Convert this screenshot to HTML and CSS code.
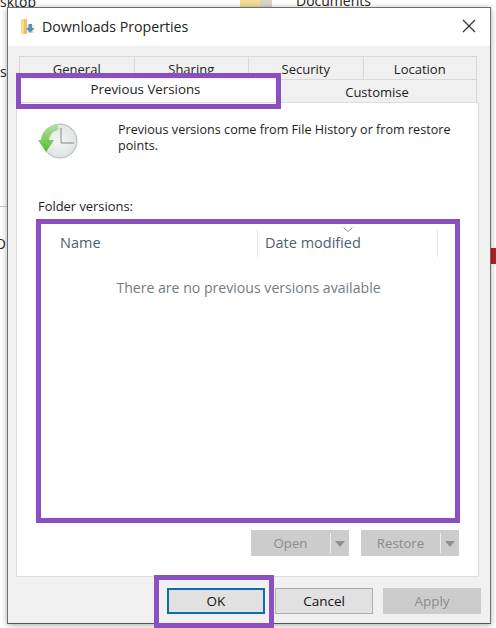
FILE: index.html
```html
<!DOCTYPE html>
<html lang="en">
<head>
    <meta charset="UTF-8">
    <meta name="viewport" content="width=device-width, initial-scale=1.0">
    <title>Downloads Properties</title>
    <link rel="stylesheet" href="styles.css">
</head>
<body>
    <div class="desktop">
        <span class="behind behind-desktop">sktop</span>
        <span class="behind behind-si">si</span>
        <span class="behind behind-o">O</span>
        <span class="behind behind-docs">Documents</span>
        <svg class="behind-folder" width="36" height="8" viewBox="0 0 36 8">
            <rect x="0" y="0" width="20" height="8" fill="#f3dc98"/>
            <rect x="20" y="0" width="12" height="8" fill="#d9d6c8"/>
        </svg>
        <div class="behind-line"></div>
        <div class="behind-red"></div>

        <div class="dialog">
            <div class="titlebar">
                <svg class="folder-icon" width="16" height="17" viewBox="0 0 16 17">
                    <path d="M1 1h6v15H1z" fill="#f5dc92"/>
                    <path d="M4 1h3v15H4z" fill="#e9c565"/>
                    <path d="M7 7h7v8H7z" fill="#f8e8b8"/>
                    <path d="M8.500 6h3.500v4h2.500l-4.250 5-4.250-5h2.500z" fill="#4f8fca"/>
                </svg>
                <span class="title">Downloads Properties</span>
                <svg class="close-icon" width="14" height="14" viewBox="0 0 14 14">
                    <path d="M1 1l12 12M13 1L1 13" stroke="#333" stroke-width="1.200" fill="none"/>
                </svg>
            </div>

            <div class="content">
                <div class="tabs">
                    <div class="tab-row row-top">
                        <div class="tab">General</div>
                        <div class="tab">Sharing</div>
                        <div class="tab">Security</div>
                        <div class="tab">Location</div>
                    </div>
                    <div class="tab-row row-bottom">
                        <div class="tab tab-active">Previous Versions</div>
                        <div class="tab">Customise</div>
                    </div>
                </div>

                <div class="panel">
                    <div class="intro">
                        <svg class="clock-icon" width="42" height="36" viewBox="0 0 42 36">
                            <defs>
                                <radialGradient id="face" cx="0.5" cy="0.5" r="0.6">
                                    <stop offset="0" stop-color="#f4f6f4"/>
                                    <stop offset="0.75" stop-color="#e2e6e4"/>
                                    <stop offset="1" stop-color="#a9b3b0"/>
                                </radialGradient>
                                <linearGradient id="arrow" x1="0" y1="0" x2="0" y2="1">
                                    <stop offset="0" stop-color="#b5dfa0"/>
                                    <stop offset="1" stop-color="#4fc02e"/>
                                </linearGradient>
                            </defs>
                            <circle cx="22" cy="18" r="17" fill="url(#face)" stroke="#b4bdba"/>
                            <path d="M23 5v15h13" stroke="#7f8a87" stroke-width="1" fill="none"/>
                            <path d="M20 1C10 2 4 8 3 17H0l8 12 8-12h-5c1-6 4-9 9-10z" fill="url(#arrow)"/>
                        </svg>
                        <p>Previous versions come from File History or from restore points.</p>
                    </div>

                    <div class="list-label">Folder versions:</div>
                    <div class="list">
                        <div class="list-head">
                            <div class="col col-name">Name</div>
                            <div class="col col-date">Date modified</div>
                            <svg class="sort-arrow" width="10" height="5" viewBox="0 0 10 5">
                                <path d="M0.500 0.500L5 4.500l4.500-4" stroke="#8d9499" fill="none"/>
                            </svg>
                        </div>
                        <div class="list-empty">There are no previous versions available</div>
                    </div>

                    <div class="split-row">
                        <div class="split-btn">
                            <span class="split-text">Open</span>
                            <span class="split-arrow"></span>
                        </div>
                        <div class="split-btn">
                            <span class="split-text">Restore</span>
                            <span class="split-arrow"></span>
                        </div>
                    </div>
                </div>

                <div class="footer">
                    <div class="btn btn-ok">OK</div>
                    <div class="btn">Cancel</div>
                    <div class="btn btn-off">Apply</div>
                </div>
            </div>
        </div>

        <div class="mark mark-tab"></div>
        <div class="mark mark-list"></div>
        <div class="mark mark-ok"></div>
    </div>
</body>
</html>
```

FILE: styles.css
```css
* {
    margin: 0;
    padding: 0;
    box-sizing: border-box;
}

body {
    font-family: "Open Sans", "Liberation Sans", sans-serif;
    background: #fff;
    color: #1a1a1a;
}

.desktop {
    position: relative;
    width: 496px;
    height: 628px;
    overflow: hidden;
    background: #fff;
}

/* stuff peeking out from behind the dialog */
.behind {
    position: absolute;
    font-size: 14px;
    line-height: 16px;
    color: #222;
}

.behind-desktop { left: 0; top: -6px; }
.behind-si { left: 0; top: 64px; }
.behind-o { left: -5px; top: 236px; }
.behind-docs { left: 296px; top: -7px; }

.behind-folder {
    position: absolute;
    left: 240px;
    top: 0;
}

.behind-line {
    position: absolute;
    left: 0;
    top: 206px;
    width: 7px;
    height: 1px;
    background: #ccc;
}

.behind-red {
    position: absolute;
    left: 491px;
    top: 248px;
    width: 5px;
    height: 16px;
    background: #b8201f;
}

.dialog {
    position: absolute;
    left: 7px;
    top: 7px;
    width: 484px;
    height: 617px;
    background: #f0f0f0;
    border: 1px solid #6f6f6f;
    border-bottom-color: #555;
    box-shadow: 0 1px 6px rgba(0, 0, 0, 0.35);
    display: flex;
    flex-direction: column;
}

.titlebar {
    height: 38px;
    flex-shrink: 0;
    background: #fff;
    display: flex;
    align-items: center;
    padding: 0 8px 0 12px;
}

.folder-icon {
    margin-right: 6px;
    margin-top: -1px;
}

.title {
    flex: 1;
    font-size: 14.200px;
    color: #222;
    margin-top: -1px;
}

.close-icon {
    margin-right: 6px;
    margin-top: -2px;
}

.content {
    flex: 1;
    padding: 10px 0 0 8px;
    display: flex;
    flex-direction: column;
}

.tabs {
    width: 461px;
    height: 46px;
    flex-shrink: 0;
    padding-left: 3px;
}

.tab-row {
    display: flex;
    height: 23px;
    width: 458px;
}

.tab {
    border: 1px solid #d9d9d9;
    border-right: none;
    border-bottom: none;
    background: #f0f0f0;
    font-size: 13px;
    line-height: 24px;
    text-align: center;
    color: #222;
    white-space: nowrap;
    overflow: hidden;
}

.tab:last-child {
    border-right: 1px solid #d9d9d9;
}

.row-top .tab {
    width: 114.500px;
}

.row-bottom {
    margin-left: -3px;
    width: 461px;
}

.row-bottom .tab {
    flex: 1;
    line-height: 25px;
}

.row-bottom .tab-active {
    flex: none;
    width: 261px;
    background: #fff;
    border: none;
    font-size: 13.300px;
    line-height: 21px;
    padding-right: 2px;
}

.panel {
    width: 463px;
    height: 475px;
    flex-shrink: 0;
    background: #fff;
    border: 1px solid #dcdcdc;
    padding: 19px 19px 0 21px;
    display: flex;
    flex-direction: column;
}

.intro {
    height: 76px;
    flex-shrink: 0;
    display: flex;
    align-items: flex-start;
}

.clock-icon {
    flex-shrink: 0;
    margin: 1px 38px 0 0;
}

.intro p {
    font-size: 12.600px;
    line-height: 16px;
    color: #1c1c1c;
    width: 345px;
}

.list-label {
    font-size: 12.900px;
    line-height: 16px;
    height: 23px;
    color: #1c1c1c;
}

.list {
    height: 295px;
    flex-shrink: 0;
    background: #fff;
    padding-top: 9px;
}

.list-head {
    position: relative;
    display: flex;
    height: 27px;
}

.col {
    font-size: 14.500px;
    line-height: 26px;
    color: #4c6072;
    padding-left: 7px;
    border-right: 1px solid #e5e5e5;
}

.col-name {
    width: 220px;
    padding-left: 22px;
}

.col-date {
    width: 180px;
}

.sort-arrow {
    position: absolute;
    left: 305px;
    top: -3px;
}

.list-empty {
    margin-top: 21px;
    font-size: 14.100px;
    line-height: 20px;
    text-align: center;
    color: #737b83;
}

.split-row {
    display: flex;
    justify-content: flex-end;
    gap: 12px;
    margin-top: 14px;
}

.split-btn {
    width: 98px;
    height: 26px;
    background: #cccccc;
    display: flex;
    align-items: center;
}

.split-text {
    flex: 1;
    text-align: center;
    font-size: 13.200px;
    color: #8b8b8b;
    border-right: 1px solid #f0f0f0;
    line-height: 20px;
}

.split-arrow {
    width: 18px;
    height: 100%;
    position: relative;
}

.split-arrow::after {
    content: "";
    position: absolute;
    left: 4px;
    top: 11px;
    border-left: 5px solid transparent;
    border-right: 5px solid transparent;
    border-top: 6px solid #8f8f8f;
}

.footer {
    display: flex;
    gap: 10px;
    padding: 11px 0 0 151px;
}

.btn {
    width: 98px;
    height: 26px;
    background: #e1e1e1;
    border: 1px solid #adadad;
    font-size: 13.500px;
    line-height: 24px;
    text-align: center;
    color: #111;
}

.btn-ok {
    border: 2px solid #0f6cac;
    line-height: 22px;
}

.btn-off {
    background: #cccccc;
    border-color: #cccccc;
    color: #8b8b8b;
}

/* purple annotation boxes drawn over the screenshot */
.mark {
    position: absolute;
    border: 5px solid #8a4fc0;
    pointer-events: none;
}

.mark-tab {
    left: 16px;
    top: 73px;
    width: 265px;
    height: 36px;
}

.mark-list {
    left: 36px;
    top: 219px;
    width: 424px;
    height: 304px;
}

.mark-ok {
    left: 154px;
    top: 575px;
    width: 120px;
    height: 53px;
}
```
